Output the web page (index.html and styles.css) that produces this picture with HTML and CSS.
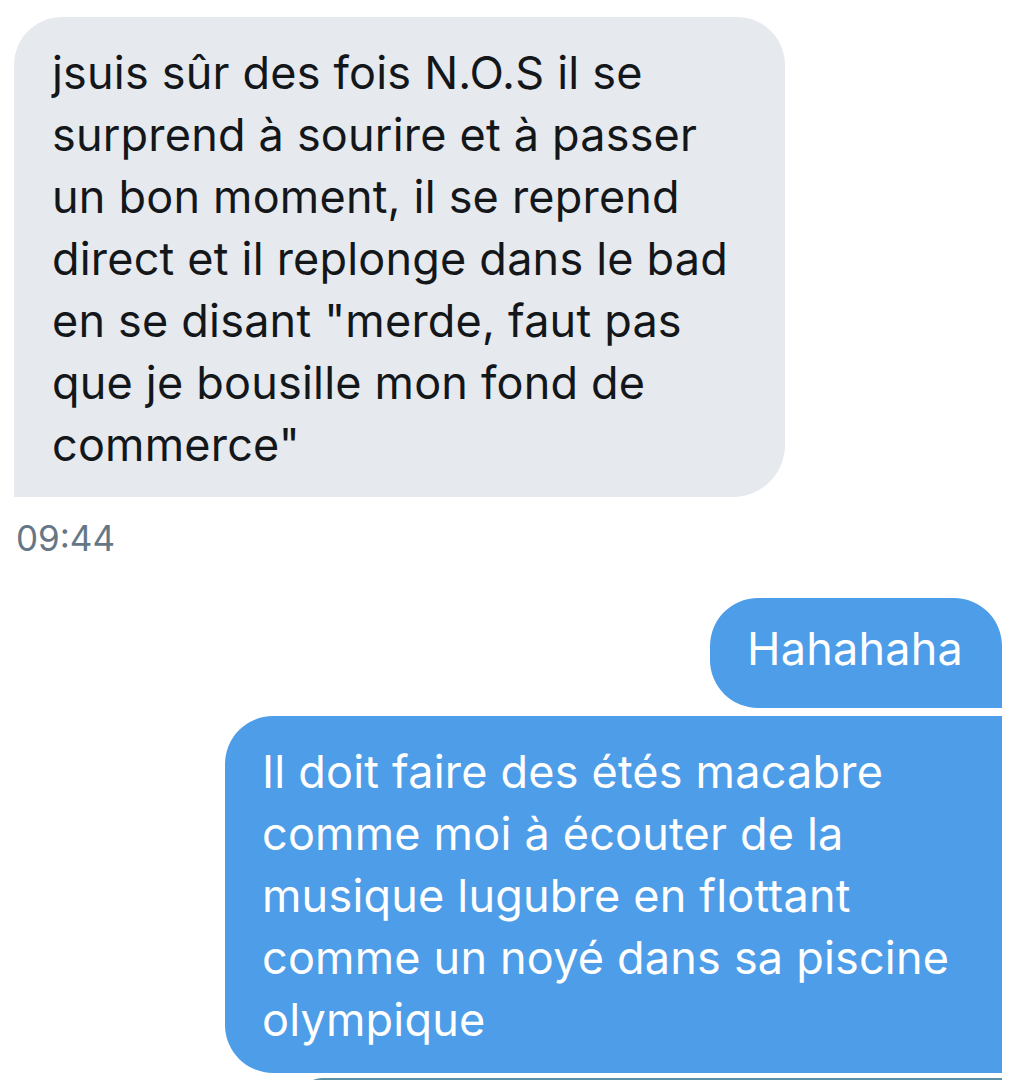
FILE: index.html
```html
<!DOCTYPE html>
<html lang="fr">
<head>
<meta charset="utf-8">
<link rel="stylesheet" href="styles.css">
</head>
<body>
<div class="thread">
  <div class="msg-in">
    <div class="bubble bubble-in">jsuis sûr des fois N.O.S il se<br>surprend à sourire et à passer<br>un bon moment, il se reprend<br>direct et il replonge dans le bad<br>en se disant "merde, faut pas<br>que je bousille mon fond de<br>commerce"</div>
    <div class="time">09:44</div>
  </div>
  <div class="msg-out">
    <div class="bubble bubble-out first">Hahahaha</div>
    <div class="bubble bubble-out middle">Il doit faire des étés macabre<br>comme moi à écouter de la<br>musique lugubre en flottant<br>comme un noyé dans sa piscine<br>olympique</div>
    <div class="bubble-out next"></div>
  </div>
</div>
</body>
</html>
```
FILE: styles.css
```css
html, body {
  margin: 0;
  padding: 0;
  background: #ffffff;
}
body {
  width: 1012px;
  height: 1080px;
  overflow: hidden;
  font-family: "Inter", "Roboto", "Liberation Sans", sans-serif;
}
.thread {
  display: flex;
  flex-direction: column;
  padding: 17px 10px 0 14px;
}
.msg-in {
  display: flex;
  flex-direction: column;
  align-items: flex-start;
}
.bubble {
  font-size: 45px;
  line-height: 62px;
  letter-spacing: 0.2px;
  white-space: nowrap;
  box-sizing: border-box;
}
.bubble-in {
  width: 771px;
  height: 480px;
  background: #e6e9ee;
  color: #14171a;
  padding: 25px 38px 0 38px;
  border-radius: 48px 48px 52px 0;
}
.time {
  margin-top: 20px;
  margin-left: 2px;
  font-size: 35px;
  line-height: 42px;
  color: #657786;
}
.msg-out {
  display: flex;
  flex-direction: column;
  align-items: flex-end;
  margin-top: 39px;
}
.bubble-out {
  background: #4e9de8;
  color: #ffffff;
}
.first {
  height: 110px;
  padding: 20px 39px 0 37px;
  border-radius: 48px 48px 0 48px;
}
.middle {
  margin-top: 8px;
  width: 777px;
  height: 357px;
  padding: 25px 37px 0 37px;
  border-radius: 48px 0 0 48px;
}
.next {
  margin-top: 5px;
  width: 700px;
  height: 20px;
  background: #5a91a6;
  border-radius: 30px 0 0 0;
}
```
